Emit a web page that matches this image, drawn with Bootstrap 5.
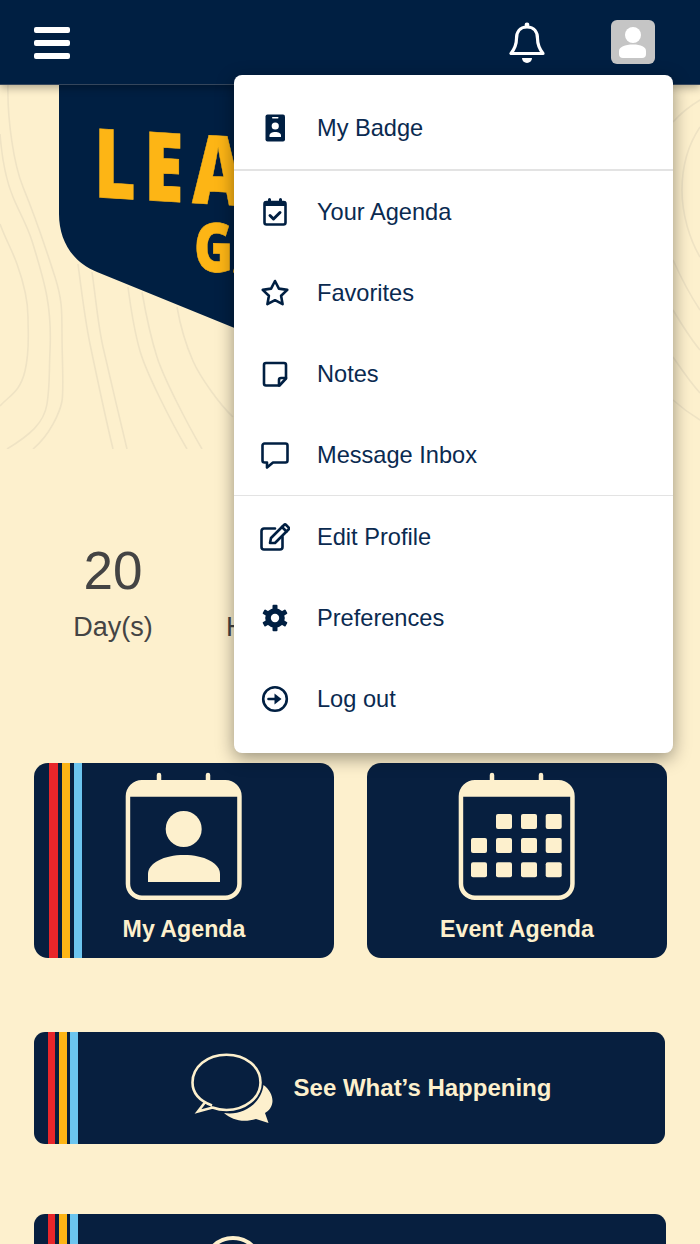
<!DOCTYPE html>
<html lang="en">
<head>
<meta charset="utf-8">
<title>Home</title>
<link href="https://cdn.jsdelivr.net/npm/bootstrap@5.3.0/dist/css/bootstrap.min.css" rel="stylesheet">
<style>
  html, body { height: 1244px; overflow: hidden; }
  body { background: #fdf0cd; font-family: "Liberation Sans", Arial, sans-serif; }
  .topbar { height: 85px; padding: 0 45px 0 34px; background: #001f42; border-bottom: 1px solid #35465c; box-shadow: 0 3px 8px rgba(0,0,0,.3); position: relative; z-index: 5; }
  .burger { width: 36px; gap: 7px; margin-top: 2px; }
  .burger i { display: block; height: 6px; background: #fff; border-radius: 2px; }
  .bell { width: 36px; height: 41px; margin-right: 66px; display: block; }
  .avatar { width: 44px; height: 44px; border-radius: 6px; background: #c5c5c5; }
  .avatar svg { display: block; }
  .acct-menu { display: block; position: absolute; top: 75px; right: 27px; left: auto; width: 439px; padding: 12px 0 14px; margin: 0; border: 0; border-radius: 8px; box-shadow: 0 5px 18px rgba(0,0,0,.4); }
  .acct-menu .dropdown-item { height: 81px; padding: 0 0 0 26px; gap: 27px; font-size: 23.6px; color: #0a2a50; }
  .acct-menu .dropdown-item svg { flex: 0 0 30px; width: 30px; height: 30px; }
  .acct-menu .dropdown-item span { padding-top: 2px; }
  .acct-menu .dropdown-divider { margin: 0; opacity: 1; border-top: 1px solid #e3e3e3; }
  .acct-menu .rule-thick { border-top-width: 2px; margin-top: 1px; }
  .hero-art { display: block; width: 700px; height: 365px; margin-top: -1px; }
  .contour { fill: none; stroke: #efe3c4; stroke-width: 1.6; }
  .logo-text { font-family: "Open Sans", sans-serif; font-weight: 800; fill: #fdb515; stroke: #fdb515; stroke-width: .6; }
  .countdown { padding: 0 34px; margin-top: 90px; color: #444; }
  .countdown .num { font-size: 53px; line-height: 64px; }
  .countdown .unit { font-size: 27px; line-height: 32px; margin-top: 8px; }
  .tiles { padding: 0 34px; margin-top: 120px; }
  .tile { background-color: #071f3f; border-radius: 14px; color: #fdf0cd; font-weight: 700; }
  .tile-pair { gap: 33px; margin-right: -1px; }
  .tile-tall { flex: 1 1 0; height: 195px; padding-top: 9px; gap: 14px; font-size: 23.2px; line-height: 28px; }
  .tile-tall svg { display: block; width: 118px; height: 129px; }
  .stripes-tall { background-image: linear-gradient(90deg, transparent 15.5px, #e8262a 15.5px 24px, transparent 24px 28px, #fdb515 28px 36px, transparent 36px 40px, #6cc5ef 40px 48px, transparent 48px); }
  .stripes-wide { background-image: linear-gradient(90deg, transparent 14.5px, #e8262a 14.5px 21.5px, transparent 21.5px 25.5px, #fdb515 25.5px 33px, transparent 33px 36.5px, #6cc5ef 36.5px 44px, transparent 44px); border-radius: 11px; }
  .tile-wide { height: 112px; margin-top: 74px; margin-right: 1px; padding-left: 43px; gap: 21px; font-size: 24px; }
  .tile-last { height: 112px; margin-top: 70px; padding: 22px 0 0 169px; }
  .ink { fill: #fdf0cd; }
  .ink-line { fill: none; stroke: #fdf0cd; }
  .gi { fill: none; stroke: #001f42; stroke-width: 2.6; stroke-linejoin: round; stroke-linecap: round; }
  .gi-bold { stroke-width: 3; }
  .gf { fill: #001f42; }
  .gw { fill: #fff; }
</style>
</head>
<body>
<header class="topbar d-flex align-items-center justify-content-between">
  <div class="burger d-flex flex-column"><i></i><i></i><i></i></div>
  <div class="d-flex align-items-center">
    <svg class="bell" viewBox="0 0 36 41" aria-label="Notifications">
      <circle cx="18" cy="3" r="2.400" fill="#fff"/>
      <path d="M18 5C10.500 5 7.500 10.500 7.500 16.500C7.500 23 5.500 27 2 31.500H34C30.500 27 28.500 23 28.500 16.500C28.500 10.500 25.500 5 18 5Z" fill="none" stroke="#fff" stroke-width="3.200" stroke-linejoin="round"/>
      <path d="M13 36h10a5 5 0 0 1-10 0z" fill="#fff"/>
    </svg>
    <div class="avatar">
      <svg width="44" height="44" viewBox="0 0 44 44"><circle cx="22" cy="15" r="8" fill="#fff"/><path d="M8 34v-3c0-4 6-6.500 14-6.500S35 27 35 31v3a4 4 0 0 1-4 4H12a4 4 0 0 1-4-4z" fill="#fff"/></svg>
    </div>
  </div>
  <ul class="dropdown-menu acct-menu list-unstyled">
    <li><a class="dropdown-item d-flex align-items-center" href="#">
      <svg viewBox="0 0 30 30"><rect class="gf" x="5.500" y="1.500" width="19.500" height="27" rx="2"/><rect class="gw" x="12" y="4" width="6.500" height="1.500" rx=".7"/><circle class="gw" cx="15.250" cy="13" r="3.600"/><path class="gw" d="M9.500 24v-1.500c0-2 2.500-3.500 5.750-3.500s5.750 1.500 5.750 3.500V24z"/></svg><span>My Badge</span></a></li>
    <li><hr class="dropdown-divider rule-thick"></li>
    <li><a class="dropdown-item d-flex align-items-center" href="#">
      <svg viewBox="0 0 30 30"><rect class="gi" x="4.500" y="5" width="21" height="22.500" rx="2"/><path class="gf" d="M4 9V6a2 2 0 0 1 2-2h18a2 2 0 0 1 2 2v3z"/><path class="gi gi-bold" d="M9.500 2.500v3M20.500 2.500v3"/><path class="gi gi-bold" d="M10 18.500l3.500 3.500 6.500-6.500"/></svg><span>Your Agenda</span></a></li>
    <li><a class="dropdown-item d-flex align-items-center" href="#">
      <svg viewBox="0 0 30 30"><polygon class="gi" points="15,3 18.900,10.600 27.300,11.900 21.100,17.800 22.600,26.200 15,22.200 7.400,26.200 8.900,17.800 2.700,11.900 11.100,10.600"/></svg><span>Favorites</span></a></li>
    <li><a class="dropdown-item d-flex align-items-center" href="#">
      <svg viewBox="0 0 30 30"><path class="gi" d="M6 4h18a2 2 0 0 1 2 2v13.500L19.500 26.500H6a2 2 0 0 1-2-2V6a2 2 0 0 1 2-2z"/><path class="gi" d="M26 19h-5a2 2 0 0 0-2 2v5.500"/></svg><span>Notes</span></a></li>
    <li><a class="dropdown-item d-flex align-items-center" href="#">
      <svg viewBox="0 0 30 30"><path class="gi" d="M4.500 3.500h21a2 2 0 0 1 2 2v15a2 2 0 0 1-2 2H13l-6 5v-5H4.500a2 2 0 0 1-2-2v-15a2 2 0 0 1 2-2z"/></svg><span>Message Inbox</span></a></li>
    <li><hr class="dropdown-divider"></li>
    <li><a class="dropdown-item d-flex align-items-center" href="#">
      <svg viewBox="0 0 30 30"><path class="gi" d="M15 6.500H4a2.500 2.500 0 0 0-2.500 2.500v16A2.500 2.500 0 0 0 4 27.500h16a2.500 2.500 0 0 0 2.500-2.500V15"/><path class="gi" d="M10 21l1-5L24 3a1.500 1.500 0 0 1 2.100 0l2.400 2.400a1.500 1.500 0 0 1 0 2.100L15 21z"/><path class="gi" d="M22 5l4.500 4.500"/></svg><span>Edit Profile</span></a></li>
    <li><a class="dropdown-item d-flex align-items-center" href="#">
      <svg viewBox="0 0 30 30"><circle class="gf" cx="15" cy="15" r="9.800"/><g class="gf"><rect x="12.500" y="1.800" width="5" height="6" rx="1"/><rect x="12.500" y="1.800" width="5" height="6" rx="1" transform="rotate(60 15 15)"/><rect x="12.500" y="1.800" width="5" height="6" rx="1" transform="rotate(120 15 15)"/><rect x="12.500" y="1.800" width="5" height="6" rx="1" transform="rotate(180 15 15)"/><rect x="12.500" y="1.800" width="5" height="6" rx="1" transform="rotate(240 15 15)"/><rect x="12.500" y="1.800" width="5" height="6" rx="1" transform="rotate(300 15 15)"/></g><circle class="gw" cx="15" cy="15" r="4.200"/></svg><span>Preferences</span></a></li>
    <li><a class="dropdown-item d-flex align-items-center" href="#">
      <svg viewBox="0 0 30 30"><circle class="gi" cx="15" cy="15" r="11.800"/><path class="gi" d="M8.500 15h7"/><path class="gf" d="M14.500 9.500l7 5.500-7 5.500z"/></svg><span>Log out</span></a></li>
  </ul>
</header>

<svg class="hero-art" viewBox="0 84 700 365" aria-label="Event logo">
  <g class="contour">
    <path d="M8 84C7 120 14 165 23 187S48 255 55 277S62 310 62 334S64 390 62 401S50 435 33 449"/>
    <path d="M0 134C2 160 6 180 13 197S27 225 32 241S44 280 47 297S51 330 50 351S50 385 47 404S30 435 7 449"/>
    <path d="M0 224C6 240 12 250 17 264S28 300 28 317S30 350 25 371S10 395 0 406"/>
    <path d="M78 264C82 295 85 320 90 344S106 420 113 449"/>
    <path d="M92 272C96 300 98 325 103 347S120 420 127 449"/>
    <path d="M128 287C131 310 134 330 140 351S170 420 187 449"/>
    <path d="M142 292C146 315 150 335 157 357S188 425 202 449"/>
    <path d="M177 307C181 330 186 345 193 361S220 405 233 417"/>
    <path d="M673 122C682 112 690 106 700 100"/>
    <path d="M700 127C688 145 682 165 682 190S690 240 700 257"/>
    <path d="M673 260C682 280 690 295 700 310"/>
    <path d="M673 310C682 325 690 338 700 350"/>
    <path d="M673 357C682 370 690 382 700 393"/>
    <path d="M673 400C682 408 690 414 700 420"/>
  </g>
  <path d="M59 84V214C59 240 72 262 97 272L350 375L641 260V84Z" fill="#001f42"/>
  <text class="logo-text" font-size="96" x="0 66.700 130.700" transform="translate(94 197) skewY(3.500) scale(.75 1)">LEA</text>
  <text class="logo-text" font-size="68" transform="translate(194 271) skewY(2) scale(.78 1)">GA</text>
</svg>

<section class="countdown row g-0 text-center">
  <div class="col-3"><div class="num">20</div><div class="unit">Day(s)</div></div>
  <div class="col-3"><div class="num">&nbsp;</div><div class="unit">Hour(s)</div></div>
</section>

<main class="tiles">
  <div class="d-flex tile-pair">
    <a class="tile tile-tall stripes-tall d-flex flex-column align-items-center text-decoration-none" href="#">
      <svg viewBox="0 0 118 129">
        <rect class="ink-line" x="2.950" y="10.250" width="111.500" height="115.500" rx="14" stroke-width="4.500"/>
        <path class="ink" d="M2.950 24.700V22a12 12 0 0 1 12-12h87.500a12 12 0 0 1 12 12v2.700z"/>
        <path class="ink-line" d="M34 3v8M83 3v8" stroke-width="4.500" stroke-linecap="round"/>
        <circle class="ink" cx="58.700" cy="57" r="18"/>
        <path class="ink" d="M23 110V102C23 91 39 83 59 83S95 91 95 102V110Z"/>
      </svg>My Agenda</a>
    <a class="tile tile-tall d-flex flex-column align-items-center text-decoration-none" href="#">
      <svg viewBox="0 0 118 129">
        <rect class="ink-line" x="2.950" y="10.250" width="111.500" height="115.500" rx="14" stroke-width="4.500"/>
        <path class="ink" d="M2.950 24.700V22a12 12 0 0 1 12-12h87.500a12 12 0 0 1 12 12v2.700z"/>
        <path class="ink-line" d="M34 3v8M83 3v8" stroke-width="4.500" stroke-linecap="round"/>
        <g class="ink">
          <rect x="38" y="42" width="16" height="15" rx="2"/><rect x="63" y="42" width="16" height="15" rx="2"/><rect x="87.700" y="42" width="16" height="15" rx="2"/>
          <rect x="13" y="66" width="16" height="15" rx="2"/><rect x="38" y="66" width="16" height="15" rx="2"/><rect x="63" y="66" width="16" height="15" rx="2"/><rect x="87.700" y="66" width="16" height="15" rx="2"/>
          <rect x="13" y="90.300" width="16" height="15" rx="2"/><rect x="38" y="90.300" width="16" height="15" rx="2"/><rect x="63" y="90.300" width="16" height="15" rx="2"/><rect x="87.700" y="90.300" width="16" height="15" rx="2"/>
        </g>
      </svg>Event Agenda</a>
  </div>
  <a class="tile tile-wide stripes-wide d-flex align-items-center justify-content-center text-decoration-none" href="#">
    <svg width="82" height="71" viewBox="0 0 82 71">
      <path class="ink" d="M33 60C50 63 70 52 72.500 32C78 36 81.500 42 81.500 48C81.500 53 78 58 74 60L77.500 70L65 66C52 70 41 67 33 60Z"/>
      <path class="ink-line" stroke-width="2.600" d="M21 52.500C9 48 1.500 40 1.500 29.500C1.500 14 16 1.800 35.500 1.800S69.500 14 69.500 29.500S54 57 35.500 57C30 57 25.500 56 21.500 54.500L7 58.500L13.500 50"/>
    </svg>
    <span>See What’s Happening</span>
  </a>
  <a class="tile tile-last stripes-wide d-block overflow-hidden text-decoration-none" href="#">
    <svg class="d-block" width="60" height="60" viewBox="0 0 60 60"><circle class="ink-line" cx="30" cy="30" r="28" stroke-width="4"/></svg>
  </a>
</main>
<script src="https://cdn.jsdelivr.net/npm/bootstrap@5.3.0/dist/js/bootstrap.bundle.min.js"></script>
</body>
</html>
